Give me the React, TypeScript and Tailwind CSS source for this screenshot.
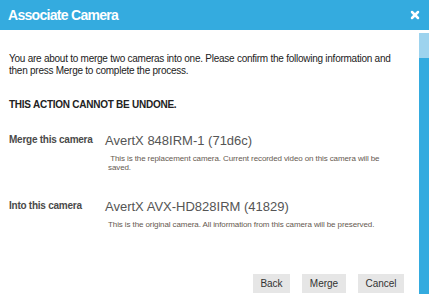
import { X } from 'lucide-react';

const rows = [
  {
    label: 'Merge this camera',
    value: 'AvertX 848IRM-1 (71d6c)',
    note: ' This is the replacement camera. Current recorded video on this camera will be saved.',
    gap: 'mt-[22px]',
  },
  {
    label: 'Into this camera',
    value: 'AvertX AVX-HD828IRM (41829)',
    note: 'This is the original camera. All information from this camera will be preserved.',
    gap: 'mt-[27px]',
  },
];

export default function App() {
  return (
    <div className="w-[429px] h-[294px] bg-white overflow-hidden flex flex-col font-['Liberation_Sans',Arial,sans-serif]">
      <div className="h-[30px] bg-[#34abdf] flex items-center justify-between pl-[8px] pr-[8px] shrink-0">
        <span className="text-white font-bold text-[14px] tracking-[-0.7px] leading-none">Associate Camera</span>
        <X className="w-[12px] h-[12px] text-white" strokeWidth={5} />
      </div>

      <div className="flex flex-1 min-h-0">
        <div className="flex-1 px-[9px] pt-[23px] text-[#222]">
          <p className="text-[10px] leading-[12px] tracking-[-0.25px] pr-[4px]">
            You are about to merge two cameras into one. Please confirm the following information and then press Merge to complete the process.
          </p>
          <p className="mt-[22px] text-[10px] leading-[12px] tracking-[-0.25px] font-bold">THIS ACTION CANNOT BE UNDONE.</p>

          {rows.map((r) => (
            <div key={r.label} className={`${r.gap} flex`}>
              <div className="w-[96px] pt-[1px] text-[10px] leading-[12px] tracking-[-0.25px] font-bold text-[#4a4a4a]">{r.label}</div>
              <div className="flex-1">
                <div className="text-[13px] leading-[15px] text-[#555]">{r.value}</div>
                <div className="mt-[6px] pl-[3px] pr-[14px] text-[8px] leading-[9px] tracking-[-0.1px] text-[#665a50] whitespace-pre-wrap">
                  {r.note}
                </div>
              </div>
            </div>
          ))}

          <div className="mt-[45px] flex justify-end gap-[12px] pr-[6px]">
            <button className="h-[19px] w-[37px] bg-[#e6e6e6] text-[10px] text-[#333]">Back</button>
            <button className="h-[19px] w-[44px] bg-[#e6e6e6] text-[10px] text-[#333]">Merge</button>
            <button className="h-[19px] w-[46px] bg-[#e6e6e6] text-[10px] text-[#333]">Cancel</button>
          </div>
        </div>

        <div className="w-[10px] mt-[3px] flex flex-col shrink-0">
          <div className="h-[25px] bg-[#9dd3ee]" />
          <div className="flex-1 bg-[#34abdf]" />
        </div>
      </div>
    </div>
  );
}
